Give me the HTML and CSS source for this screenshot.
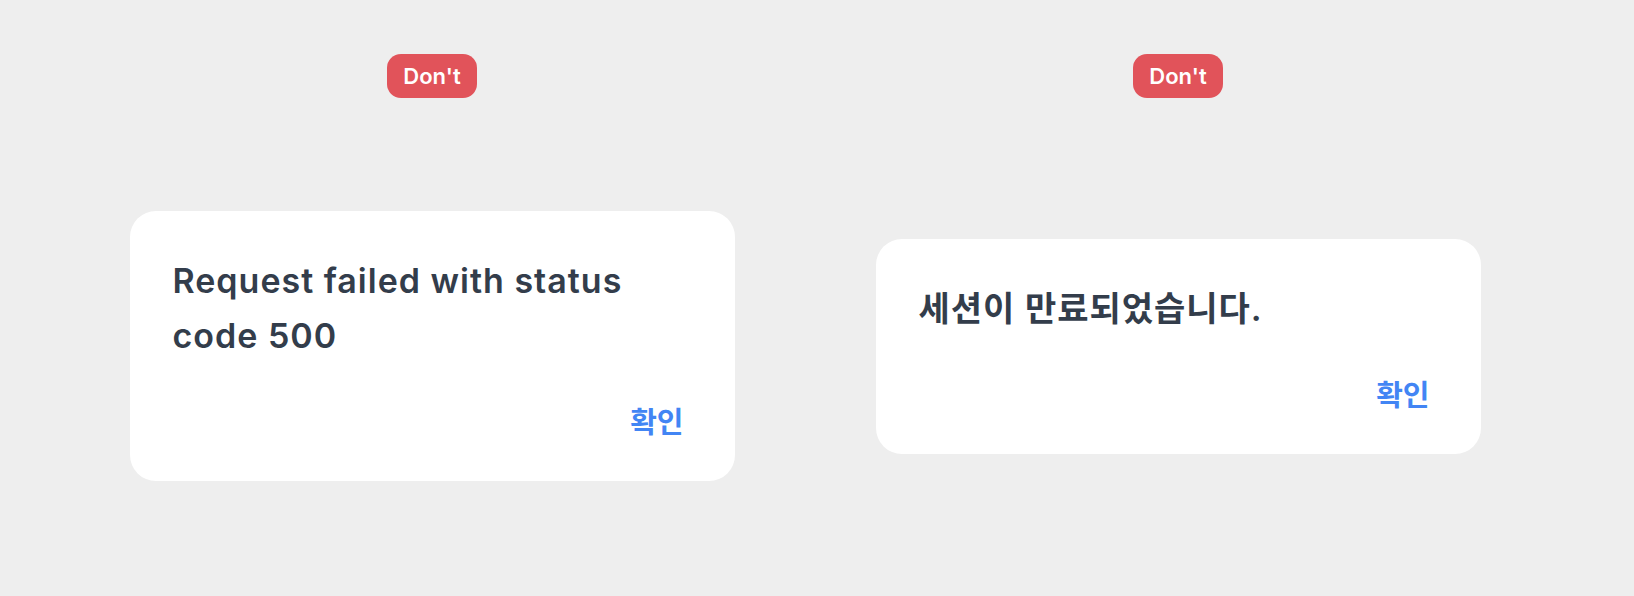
FILE: index.html
```html
<!DOCTYPE html>
<html lang="ko">
<head>
<meta charset="utf-8">
<title>Don't examples</title>
<link rel="stylesheet" href="styles.css">
</head>
<body>
<main class="board">
  <section class="column">
    <span class="badge">Don't</span>
    <div class="stage">
      <div class="dialog">
        <p class="message">Request failed with status code 500</p>
        <div class="actions"><button class="confirm" type="button">확인</button></div>
      </div>
    </div>
  </section>
  <section class="column">
    <span class="badge">Don't</span>
    <div class="stage">
      <div class="dialog">
        <p class="message">세션이 만료되었습니다.</p>
        <div class="actions"><button class="confirm" type="button">확인</button></div>
      </div>
    </div>
  </section>
</main>
</body>
</html>
```
FILE: styles.css
```css
html, body {
  margin: 0;
  padding: 0;
}

body {
  background: #eeeeee;
  font-family: Inter, "Noto Sans CJK KR", sans-serif;
  color: #333d4b;
}

.board {
  display: grid;
  grid-template-columns: 746px 746px;
  padding-left: 59px;
  height: 596px;
  box-sizing: border-box;
}

.column {
  display: flex;
  flex-direction: column;
  align-items: center;
  padding-top: 54px;
  padding-bottom: 2px;
  box-sizing: border-box;
  height: 596px;
}

.badge {
  display: flex;
  align-items: center;
  height: 44px;
  padding: 0 16px;
  border-radius: 14px;
  background: #e1535a;
  color: #ffffff;
  font-family: Inter, sans-serif;
  font-weight: 600;
  font-size: 22px;
  box-sizing: border-box;
}

.stage {
  flex: 1;
  display: flex;
  align-items: center;
  justify-content: center;
  width: 100%;
}

.dialog {
  width: 605px;
  box-sizing: border-box;
  background: #ffffff;
  border-radius: 26px;
  padding: 42px 51px 41px 43px;
}

.message {
  margin: 0;
  font-size: 34px;
  line-height: 55px;
  font-weight: 600;
  letter-spacing: 1px;
  color: #333d4b;
}

.actions {
  display: flex;
  justify-content: flex-end;
  margin-top: 37px;
}

.confirm {
  border: 0;
  background: none;
  padding: 0;
  margin: 0;
  font-family: "Noto Sans CJK KR", sans-serif;
  font-weight: 700;
  font-size: 29px;
  line-height: 40px;
  color: #4285f4;
}
```
